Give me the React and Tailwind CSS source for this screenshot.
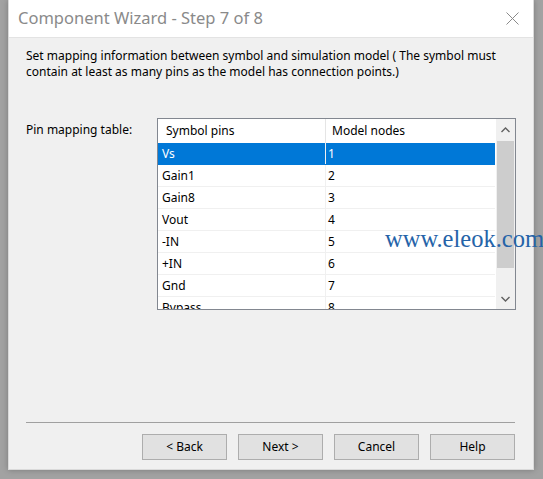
import React from "react";

const rows = [
  ["Vs", "1"],
  ["Gain1", "2"],
  ["Gain8", "3"],
  ["Vout", "4"],
  ["-IN", "5"],
  ["+IN", "6"],
  ["Gnd", "7"],
  ["Bypass", "8"],
];

const WinButton = ({ children }) => (
  <button className="w-[85px] h-[26px] bg-[#e1e1e1] border border-[#adadad] text-[12px] text-black leading-none">
    {children}
  </button>
);

export default function App() {
  return (
    <div
      className="w-[543px] h-[479px] bg-[#a2a2a2] pl-[8px] pr-[9px] pb-[9px] overflow-hidden"
      style={{ fontFamily: '"Noto Sans", "Open Sans", sans-serif' }}
    >
      <div className="w-full h-full flex flex-col bg-[#f0f0f0] border-l border-r border-b border-[#dadada] shadow-[0_0_6px_rgba(0,0,0,0.25)]">
        {/* title bar */}
        <div className="h-[38px] bg-white flex items-center justify-between pl-[9px] pr-[14px] border-b border-[#e3e3e3]">
          <span className="text-[16.5px] text-[#8a8a8a] leading-none">Component Wizard - Step 7 of 8</span>
          <svg width="13" height="13" viewBox="0 0 13 13" className="mb-[1px]">
            <path d="M0.5 0.5 L12.5 12.5 M12.5 0.5 L0.5 12.5" stroke="#8a8a8a" strokeWidth="1" />
          </svg>
        </div>

        <div className="flex-1 flex flex-col px-[17px] pt-[10px]">
          <p className="text-[12px] leading-[16px] text-black pr-[8px]">
            Set mapping information between symbol and simulation model ( The symbol must contain at least as many pins as the model has connection points.)
          </p>

          <div className="flex mt-[38px]">
            <div className="w-[131px] text-[12px] text-black pt-[3px]">Pin mapping table:</div>
            <div className="relative w-[359px] h-[192px] border border-[#828790] bg-white flex overflow-hidden">
              <div className="flex-1 flex flex-col">
                <div className="h-[24px] flex text-[12px] text-black shrink-0">
                  <div className="w-[168px] pl-[8px] flex items-center border-r border-[#e5e5e5]">Symbol pins</div>
                  <div className="flex-1 pl-[6px] flex items-center">Model nodes</div>
                </div>
                {rows.map(([pin, node], i) => (
                  <div
                    key={pin}
                    className={
                      i === 0
                        ? "h-[22px] shrink-0 flex text-[12px] bg-[#0078d7] text-white border-b border-[#0078d7]"
                        : "h-[22px] shrink-0 flex text-[12px] text-black border-b border-[#f0f0f0]"
                    }
                  >
                    <div className="w-[168px] pl-[4px] flex items-center border-r border-[#f0f0f0]">{pin}</div>
                    <div className="flex-1 pl-[2px] flex items-center">{node}</div>
                  </div>
                ))}
              </div>
              {/* scrollbar */}
              <div className="w-[19px] ml-[1px] flex flex-col bg-[#f0f0f0] shrink-0">
                <div className="h-[22px] flex items-center justify-center">
                  <svg width="9" height="6" viewBox="0 0 9 6">
                    <path d="M0.5 5 L4.5 1 L8.5 5" stroke="#606060" strokeWidth="1.4" fill="none" />
                  </svg>
                </div>
                <div className="h-[127px] mx-[1px] bg-[#cdcdcd]" />
                <div className="flex-1 flex items-end justify-center pb-[7px]">
                  <svg width="9" height="6" viewBox="0 0 9 6">
                    <path d="M0.5 1 L4.5 5 L8.5 1" stroke="#606060" strokeWidth="1.4" fill="none" />
                  </svg>
                </div>
              </div>
            </div>
          </div>

          <div className="mt-auto mb-[11px] h-px bg-[#a0a0a0] mr-[1px]" />
          <div className="flex justify-end gap-[11px] mb-[9px] pr-[1px]">
            <WinButton>&lt; Back</WinButton>
            <WinButton>Next &gt;</WinButton>
            <WinButton>Cancel</WinButton>
            <WinButton>Help</WinButton>
          </div>
        </div>
      </div>
      <div
        className="absolute left-[385px] top-[227px] text-[24.5px] text-[#2563a8] leading-none whitespace-nowrap"
        style={{ fontFamily: '"Liberation Serif", serif' }}
      >
        www.eleok.com
      </div>
    </div>
  );
}
